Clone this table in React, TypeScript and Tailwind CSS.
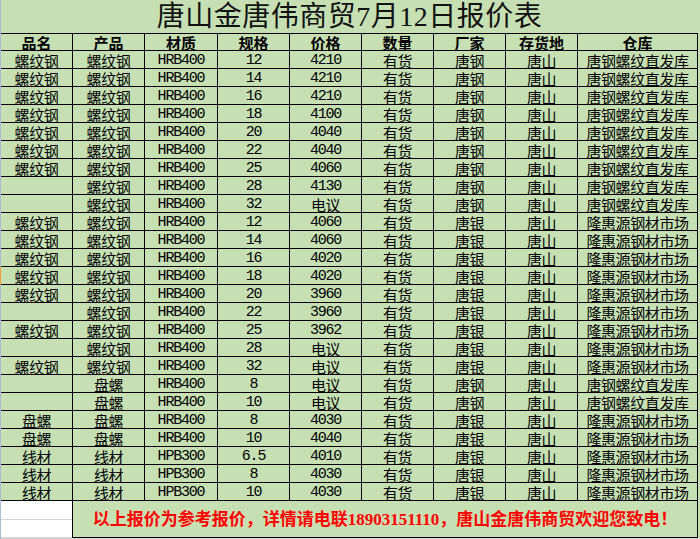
import React from 'react';

type Row = string[];

const TG = ['有货', '唐钢', '唐山', '唐钢螺纹直发库'];
const TY = ['有货', '唐银', '唐山', '隆惠源钢材市场'];

const rows: Row[] = [
  ['螺纹钢', '螺纹钢', 'HRB400', '12', '4210', ...TG],
  ['螺纹钢', '螺纹钢', 'HRB400', '14', '4210', ...TG],
  ['螺纹钢', '螺纹钢', 'HRB400', '16', '4210', ...TG],
  ['螺纹钢', '螺纹钢', 'HRB400', '18', '4100', ...TG],
  ['螺纹钢', '螺纹钢', 'HRB400', '20', '4040', ...TG],
  ['螺纹钢', '螺纹钢', 'HRB400', '22', '4040', ...TG],
  ['螺纹钢', '螺纹钢', 'HRB400', '25', '4060', ...TG],
  ['', '螺纹钢', 'HRB400', '28', '4130', ...TG],
  ['', '螺纹钢', 'HRB400', '32', '电议', ...TG],
  ['螺纹钢', '螺纹钢', 'HRB400', '12', '4060', ...TY],
  ['螺纹钢', '螺纹钢', 'HRB400', '14', '4060', ...TY],
  ['螺纹钢', '螺纹钢', 'HRB400', '16', '4020', ...TY],
  ['螺纹钢', '螺纹钢', 'HRB400', '18', '4020', ...TY],
  ['螺纹钢', '螺纹钢', 'HRB400', '20', '3960', ...TY],
  ['', '螺纹钢', 'HRB400', '22', '3960', ...TY],
  ['螺纹钢', '螺纹钢', 'HRB400', '25', '3962', ...TY],
  ['', '螺纹钢', 'HRB400', '28', '电议', ...TY],
  ['螺纹钢', '螺纹钢', 'HRB400', '32', '电议', ...TY],
  ['', '盘螺', 'HRB400', '8', '电议', ...TG],
  ['', '盘螺', 'HRB400', '10', '电议', ...TG],
  ['盘螺', '盘螺', 'HRB400', '8', '4030', ...TY],
  ['盘螺', '盘螺', 'HRB400', '10', '4040', ...TY],
  ['线材', '线材', 'HPB300', '6.5', '4010', ...TY],
  ['线材', '线材', 'HPB300', '8', '4030', ...TY],
  ['线材', '线材', 'HPB300', '10', '4030', ...TY],
];

const headers = ['品名', '产品', '材质', '规格', '价格', '数量', '厂家', '存货地', '仓库'];

// column widths include the right border line
const widths = ['w-[72px]', 'w-[72px]', 'w-[73px]', 'w-[72px]', 'w-[72px]', 'w-[72px]', 'w-[72px]', 'w-[72px]', 'w-[120px]'];

const isAscii = (s: string) => /^[\x00-\x7f]*$/.test(s);

const Strip = ({ active }: { active?: boolean }) => (
  <div className={active ? 'w-px shrink-0 bg-[#f2a03d]' : 'w-px shrink-0 bg-[#a9bdd6]'} />
);

const Cell = ({ text, w }: { text: string; w: string }) => (
  <div
    className={`${w} shrink-0 h-full flex items-center justify-center border-r border-b border-black text-black pt-[2px] leading-none ${
      isAscii(text)
        ? "font-['Liberation_Mono',monospace] text-[15px] tracking-[-1.2px]"
        : "font-['Noto_Sans_CJK_SC',sans-serif] text-[15px] tracking-[-0.4px]"
    }`}
  >
    {text}
  </div>
);

export default function App() {
  return (
    <div className="w-[700px] h-[539px] bg-white overflow-hidden flex flex-col">
      {/* title */}
      <div className="flex h-[34px] shrink-0 bg-[#c6e0b4]">
        <Strip />
        <div className="w-[697px] h-full border-b border-black flex items-center justify-center pt-[1px] font-['Liberation_Serif','Noto_Sans_CJK_SC',serif] text-[28px] leading-none text-[#111] tracking-[0.5px]">
          唐山金唐伟商贸7月12日报价表
        </div>
        <div className="w-[2px] bg-[#c6e0b4]" />
      </div>

      {/* header */}
      <div className="flex h-[17px] shrink-0 bg-[#c6e0b4]">
        <Strip />
        {headers.map((h, i) => (
          <div
            key={h}
            className={`${widths[i]} shrink-0 h-full flex items-center justify-center border-r border-b border-black pt-[1px] font-['Noto_Sans_CJK_SC',sans-serif] font-bold text-[15px] leading-none text-black`}
          >
            {h}
          </div>
        ))}
        <div className="w-[2px] bg-[#c6e0b4]" />
      </div>

      {/* rows */}
      {rows.map((r, ri) => (
        <div key={ri} className="flex h-[18px] shrink-0 bg-[#c6e0b4]">
          <Strip active={ri === 12} />
          {r.map((c, ci) => (
            <Cell key={ci} text={c} w={widths[ci]} />
          ))}
          <div className="w-[2px] bg-[#c6e0b4]" />
        </div>
      ))}

      {/* footer */}
      <div className="flex h-[37px] shrink-0">
        <Strip />
        <div className="w-[71px] shrink-0 flex flex-col bg-white">
          <div className="h-[19px] border-b border-[#d4d4d4]" />
          <div className="h-[18px] border-b border-[#d4d4d4]" />
        </div>
        <div className="w-[626px] shrink-0 h-full bg-[#c6e0b4] border-l border-r border-b border-black flex items-center justify-center pt-[1px] font-['Liberation_Serif','Noto_Sans_CJK_SC',serif] font-bold text-[17px] leading-none text-[#ff0000]">
          以上报价为参考报价，详情请电联18903151110，唐山金唐伟商贸欢迎您致电！
        </div>
        <div className="w-[2px] bg-[#c6e0b4]" />
      </div>
      <div className="flex h-px shrink-0">
        <Strip />
        <div className="flex-1 bg-[#d4d4d4]" />
      </div>
    </div>
  );
}
